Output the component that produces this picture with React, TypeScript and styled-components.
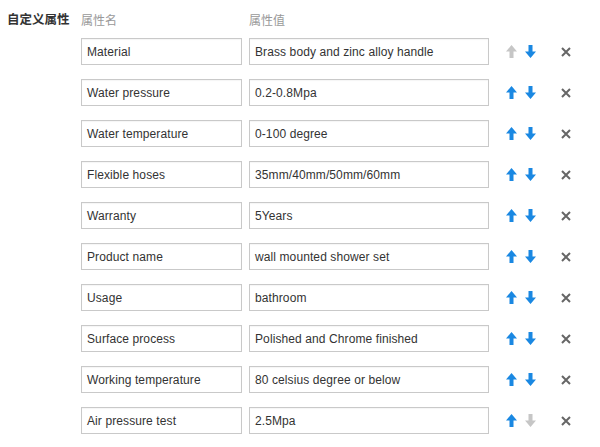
import React from "react";
import styled, { createGlobalStyle } from "styled-components";

const Global = createGlobalStyle`
  html, body { margin: 0; padding: 0; background: #fff; }
  body { font-family: "Liberation Sans", Arial, "Noto Sans CJK SC", sans-serif; font-size: 12px; color: #333; }
`;

const Page = styled.div`
  display: flex;
  align-items: flex-start;
`;

const SideLabel = styled.div`
  width: 74px;
  padding-left: 7px;
  height: 38px;
  line-height: 38px;
  font-weight: bold;
  color: #333;
  font-family: "Noto Sans CJK SC", sans-serif;
  font-size: 12.5px;
`;

const Table = styled.div`
  display: flex;
  flex-direction: column;
`;

const HeaderRow = styled.div`
  display: flex;
  height: 38px;
  align-items: center;
  color: #999;
  font-family: "Noto Sans CJK SC", sans-serif;
  font-size: 12px;
`;

const HeadCell = styled.div<{ $w: number }>`
  width: ${(p) => p.$w}px;
`;

const Rows = styled.div`
  display: flex;
  flex-direction: column;
  gap: 14px;
`;

const Row = styled.div`
  display: flex;
  align-items: center;
  height: 27px;
`;

const Field = styled.div<{ $w: number; $mr: number }>`
  box-sizing: border-box;
  width: ${(p) => p.$w}px;
  height: 27px;
  margin-right: ${(p) => p.$mr}px;
  border: 1px solid #c9c9c9;
  box-shadow: inset 0 1px 1px rgba(0, 0, 0, 0.04);
  padding-left: 5px;
  line-height: 26px;
  font-size: 12px;
  letter-spacing: 0.1px;
  color: #333;
  white-space: nowrap;
  overflow: hidden;
`;

const Arrows = styled.div`
  display: flex;
  align-items: center;
  gap: 8px;
  margin-right: 25px;
`;

const IconBtn = styled.span`
  display: inline-flex;
  width: 11px;
  height: 13px;
  align-items: center;
  justify-content: center;
`;

const Close = styled.span`
  display: inline-flex;
  width: 10px;
  height: 10px;
`;

const BLUE = "#1a88e2";
const GRAY = "#c6c6c6";

const UpArrow = ({ color }: { color: string }) => (
  <svg width="11" height="13" viewBox="0 0 11 13">
    <path d="M5.5 0 L11 6.5 L7.5 6.5 L7.5 13 L3.5 13 L3.5 6.5 L0 6.5 Z" fill={color} />
  </svg>
);

const DownArrow = ({ color }: { color: string }) => (
  <svg width="11" height="13" viewBox="0 0 11 13">
    <path d="M3.5 0 L7.5 0 L7.5 6.5 L11 6.5 L5.5 13 L0 6.5 L3.5 6.5 Z" fill={color} />
  </svg>
);

const XIcon = () => (
  <svg width="10" height="10" viewBox="0 0 10 10">
    <path d="M1 1 L9 9 M9 1 L1 9" stroke="#666" strokeWidth="2" strokeLinecap="butt" />
  </svg>
);

const data: [string, string][] = [
  ["Material", "Brass body and zinc alloy handle"],
  ["Water pressure", "0.2-0.8Mpa"],
  ["Water temperature", "0-100 degree"],
  ["Flexible hoses", "35mm/40mm/50mm/60mm"],
  ["Warranty", "5Years"],
  ["Product name", "wall mounted shower set"],
  ["Usage", "bathroom"],
  ["Surface process", "Polished and Chrome finished"],
  ["Working temperature", "80 celsius degree or below"],
  ["Air pressure test", "2.5Mpa"],
];

export default function App() {
  return (
    <>
      <Global />
      <Page>
        <SideLabel>自定义属性</SideLabel>
        <Table>
          <HeaderRow>
            <HeadCell $w={168}>属性名</HeadCell>
            <HeadCell $w={240}>属性值</HeadCell>
          </HeaderRow>
          <Rows>
            {data.map(([k, v], i) => (
              <Row key={k}>
                <Field $w={161} $mr={7}>{k}</Field>
                <Field $w={240} $mr={17}>{v}</Field>
                <Arrows>
                  <IconBtn>
                    <UpArrow color={i === 0 ? GRAY : BLUE} />
                  </IconBtn>
                  <IconBtn>
                    <DownArrow color={i === data.length - 1 ? GRAY : BLUE} />
                  </IconBtn>
                </Arrows>
                <Close>
                  <XIcon />
                </Close>
              </Row>
            ))}
          </Rows>
        </Table>
      </Page>
    </>
  );
}
